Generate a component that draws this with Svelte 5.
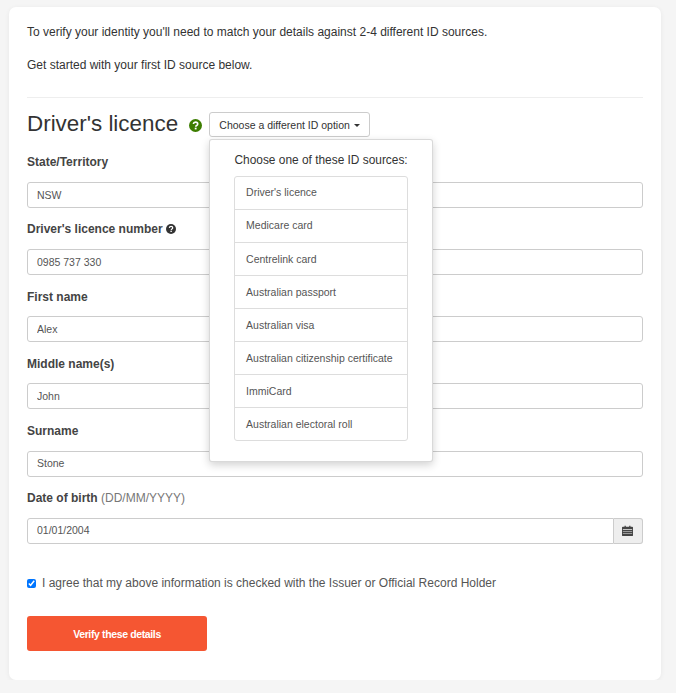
<script>
  const sources = ["Driver's licence","Medicare card","Centrelink card","Australian passport","Australian visa","Australian citizenship certificate","ImmiCard","Australian electoral roll"];
  const fields = [
    { label: 'State/Territory', value: 'NSW' },
    { label: "Driver's licence number", value: '0985 737 330', help: true },
    { label: 'First name', value: 'Alex' },
    { label: 'Middle name(s)', value: 'John' },
    { label: 'Surname', value: 'Stone' }
  ];
</script>

{#snippet question(cls)}
  <svg class={cls} viewBox="0 0 24 24" aria-hidden="true">
    <circle cx="12" cy="12" r="12" fill="currentColor"/>
    <path d="M8 9.2C8.3 6.9 10 5.8 12.1 5.8c2.300 0 4 1.400 4 3.300 0 1.600-.9 2.300-2 3-1 .6-1.500 1-1.500 2.100" fill="none" stroke="#fff" stroke-width="3"/>
    <rect x="10.600" y="16" width="3.400" height="3.200" fill="#fff"/>
  </svg>
{/snippet}

<main class="card">
  <p class="intro">To verify your identity you'll need to match your details against 2-4 different ID sources.</p>
  <p class="intro second">Get started with your first ID source below.</p>
  <hr />
  <div class="heading">
    <h1>Driver's licence</h1>
    {@render question('help-green')}
    <div class="dropdown">
      <button class="toggle" type="button">Choose a different ID option<span class="caret"></span></button>
      <div class="menu">
        <div class="menu-title">Choose one of these ID sources:</div>
        <ul>
          {#each sources as s}<li>{s}</li>{/each}
        </ul>
      </div>
    </div>
  </div>
  {#each fields as f}
    <div class="group">
      <label>{f.label}{#if f.help}{' '}{@render question('help-dark')}{/if}</label>
      <input type="text" value={f.value} />
    </div>
  {/each}
  <div class="group">
    <label>Date of birth <span class="hint">(DD/MM/YYYY)</span></label>
    <div class="input-group">
      <input type="text" value="01/01/2004" />
      <span class="addon">
        <svg viewBox="0 0 13 13" width="11" height="11" aria-hidden="true">
          <path fill="#444" d="M1 2h2V.8h1.500V2h4V.8H10V2h2a1 1 0 0 1 1 1v9a1 1 0 0 1-1 1H1a1 1 0 0 1-1-1V3a1 1 0 0 1 1-1z"/>
          <path fill="#eee" d="M1 5h11v.8H1zM1 7.300h11v.6H1zM1 9.500h11v.6H1z"/>
        </svg>
      </span>
    </div>
  </div>
  <label class="agree">
    <input type="checkbox" checked />
    <span>I agree that my above information is checked with the Issuer or Official Record Holder</span>
  </label>
  <button class="verify" type="button">Verify these details</button>
</main>

<style>
  :global(body) {
    margin: 0;
    background: #f5f5f5;
    font-family: "Liberation Sans", Arial, sans-serif;
  }
  .card {
    box-sizing: border-box;
    width: 652px;
    height: 673px;
    margin: 7px 0 0 9px;
    padding: 19px 18px 0;
    background: #fff;
    border-radius: 7px;
    box-shadow: 0 1px 5px rgba(0, 0, 0, 0.06);
    color: #333;
    font-size: 12px;
  }
  .intro {
    margin: 0;
    line-height: 13px;
    height: 13px;
  }
  .second {
    margin-top: 20px;
  }
  hr {
    margin: 25px 0 0;
    border: 0;
    border-top: 1px solid #eee;
  }
  .heading {
    display: flex;
    align-items: center;
    height: 25px;
    margin-top: 14px;
  }
  h1 {
    margin: 0;
    padding-bottom: 2px;
    font-size: 22.400px;
    font-weight: 400;
    line-height: 25px;
    color: #333;
  }
  .help-green {
    width: 13px;
    height: 13px;
    margin: 1px 7px 0 11px;
    color: #3c7d00;
  }
  .help-dark {
    width: 10px;
    height: 10px;
    vertical-align: -1px;
    color: #333;
  }
  .dropdown {
    position: relative;
  }
  .toggle {
    display: block;
    width: 161px;
    height: 25px;
    padding: 0;
    background: #fff;
    border: 1px solid #ccc;
    border-radius: 3px;
    font: 10.500px "Liberation Sans", Arial, sans-serif;
    color: #333;
    white-space: nowrap;
  }
  .caret {
    display: inline-block;
    margin-left: 4px;
    vertical-align: middle;
    border-top: 3px solid #333;
    border-left: 3px solid transparent;
    border-right: 3px solid transparent;
  }
  .menu {
    position: absolute;
    z-index: 2;
    top: 27px;
    left: 0;
    box-sizing: border-box;
    width: 224px;
    height: 323px;
    padding: 13px 24px;
    background: #fff;
    border: 1px solid rgba(0, 0, 0, 0.15);
    border-radius: 3px;
    box-shadow: 0 3px 9px rgba(0, 0, 0, 0.18);
  }
  .menu-title {
    text-align: center;
    font-size: 11.900px;
    line-height: 14px;
    white-space: nowrap;
    color: #333;
  }
  ul {
    margin: 9px 0 0;
    padding: 0;
    list-style: none;
    border: 1px solid #ddd;
    border-radius: 3px;
  }
  li {
    box-sizing: border-box;
    height: 33px;
    padding: 0 11px;
    border-top: 1px solid #ddd;
    font-size: 10.500px;
    line-height: 33px;
    color: #555;
  }
  li:first-child {
    border-top: 0;
    height: 32px;
    line-height: 31px;
  }
  li:nth-child(2) {
    line-height: 31px;
  }
  .group {
    margin-bottom: 12.400px;
  }
  .heading + .group {
    margin-top: 16.200px;
  }
  .group label {
    display: block;
    height: 17.200px;
    margin-bottom: 11.600px;
    font-weight: 700;
    line-height: 19px;
    color: #444;
  }
  .hint {
    font-weight: 400;
    color: #777;
  }
  input[type="text"] {
    display: block;
    box-sizing: border-box;
    width: 100%;
    height: 26px;
    padding: 0 9px 0.800px;
    border: 1px solid #ccc;
    border-radius: 3px;
    background: #fff;
    font: 10.500px "Liberation Sans", Arial, sans-serif;
    color: #555;
    outline: none;
  }
  .input-group {
    display: flex;
  }
  .input-group input[type="text"] {
    flex: 1;
    padding-bottom: 2px;
    border-radius: 3px 0 0 3px;
  }
  .addon {
    box-sizing: border-box;
    display: flex;
    align-items: center;
    justify-content: center;
    width: 29px;
    height: 26px;
    padding-right: 2px;
    background: #eee;
    border: 1px solid #ccc;
    border-left: 0;
    border-radius: 0 3px 3px 0;
  }
  .agree {
    display: flex;
    align-items: center;
    gap: 6px;
    margin-top: 32.600px;
    height: 14px;
    color: #555;
  }
  .agree input {
    width: 9px;
    height: 9px;
    margin: 0;
  }
  .verify {
    display: block;
    width: 180px;
    height: 35px;
    margin-top: 26px;
    padding: 0;
    border: 0;
    border-radius: 3px;
    background: #f55632;
    color: #fff;
    font: 700 10.500px "Liberation Sans", Arial, sans-serif;
    letter-spacing: -0.370px;
  }
</style>
